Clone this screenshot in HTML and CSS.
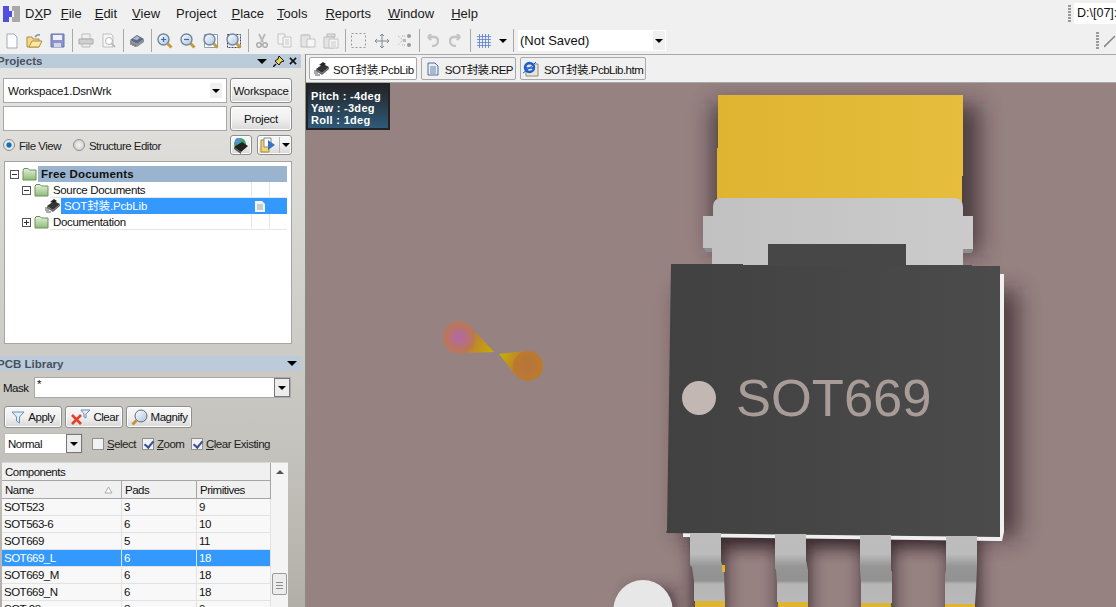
FILE: index.html
```html
<!DOCTYPE html>
<html lang="en">
<head>
<meta charset="utf-8">
<title>DXP</title>
<link rel="stylesheet" href="styles.css">
</head>
<body>
<svg class="defs" width="0" height="0" aria-hidden="true">
  <defs>
    <linearGradient id="fold" x1="0" y1="0" x2="0" y2="1"><stop offset="0" stop-color="#e4f0da"/><stop offset="1" stop-color="#8fbc78"/></linearGradient>
    <linearGradient id="glass" x1="0" y1="0" x2="1" y2="1"><stop offset="0" stop-color="#fff"/><stop offset="1" stop-color="#a9c4e4"/></linearGradient>
    <symbol id="folder" viewBox="0 0 15 14"><path d="M1 3.5 2 1.5H6L7.5 3H14V13H1Z" fill="url(#fold)" stroke="#6e8f5c"/></symbol>
    <symbol id="chip" viewBox="0 0 16 16"><path d="M2 8 9 3 15 6 8 12Z" fill="#333"/><path d="M2 8 8 12V14L2 10ZM8 12 15 6V8L8 14Z" fill="#666"/><path d="M5 4 9 1 12 3 9 5Z" fill="#222"/><path d="M0 10h3M0 12h4M1 14h5" stroke="#555"/></symbol>
    <symbol id="mag" viewBox="0 0 16 16"><circle cx="6.5" cy="6.5" r="5.5" fill="url(#glass)" stroke="#74859b" stroke-width="1.4"/><path d="M10.500 10.500 14.500 14.500" stroke="#c79a3c" stroke-width="3"/></symbol>
  </defs>
</svg>
<div class="app">
  <header class="menubar">
    <svg class="logo" width="17" height="16" viewBox="0 0 17 16"><path fill="#4f4fe0" d="M0 0H6V5H9V11H6V16H0Z"/><path fill="#a9a9a9" d="M9 0H17V16H9V11H11V5H9Z"/></svg>
    <nav class="menu">
      <span>D<u>X</u>P</span><span class="m-file"><u>F</u>ile</span><span class="m-edit"><u>E</u>dit</span><span class="m-view"><u>V</u>iew</span><span>Pro<u>j</u>ect</span><span class="m-view"><u>P</u>lace</span><span class="m-tools"><u>T</u>ools</span><span class="m-reports"><u>R</u>eports</span><span class="m-help"><u>W</u>indow</span><span class="m-help"><u>H</u>elp</span>
    </nav>
    <i class="grip grip-menu"></i>
    <div class="path">D:\[07]:</div>
  </header>

  <div class="toolbar">
    <span class="tb"><svg width="14" height="16" viewBox="0 0 14 16"><path d="M2 1H9L12 4V15H2Z" fill="#fcfdff" stroke="#a3abb6"/></svg></span>
    <span class="tb"><svg width="17" height="15" viewBox="0 0 17 15"><path d="M1 4H6L7 6H13V14H1Z" fill="#f3d98e" stroke="#b08f3c"/><path d="M3 14 6 8H16L13 14Z" fill="#fbe7a9" stroke="#b08f3c"/><path d="M9 4Q11 1 14 2" fill="none" stroke="#7f8fa6" stroke-width="1.5"/></svg></span>
    <span class="tb"><svg width="15" height="15" viewBox="0 0 15 15"><path d="M1 1H14V14H1Z" fill="#8a94d2" stroke="#6b75a8"/><path d="M3 2H12V7H3Z" fill="#eef0f8"/><path d="M4 10H11V14H4Z" fill="#d4d8e6"/></svg></span>
    <i class="sep"></i>
    <span class="tb off"><svg width="16" height="15" viewBox="0 0 16 15"><path d="M4 1H12V6H4Z" fill="#f1f1f1" stroke="#bbb"/><path d="M1 6H15V11H1Z" fill="#cfcfcf" stroke="#aaa"/><path d="M4 11H12V14H4Z" fill="#eee" stroke="#bbb"/></svg></span>
    <span class="tb off"><svg width="16" height="15" viewBox="0 0 16 15"><path d="M2 1H10L12 3V14H2Z" fill="#f6f6f6" stroke="#c0c0c0"/><circle cx="8" cy="8" r="3.500" fill="#fff" stroke="#b5b5b5"/><path d="M10.500 10.500 14 14" stroke="#bbb" stroke-width="2"/></svg></span>
    <i class="sep"></i>
    <span class="tb"><svg width="16" height="15" viewBox="0 0 16 15"><path d="M1 7 8 2 15 6 8 11Z" fill="#5d6b85"/><path d="M4 6 8 3 11 5 8 7Z" fill="#a9c0dc"/><path d="M1 7 8 11V14L1 10ZM8 11 15 6V9L8 14Z" fill="#8a8f98"/><path d="M2 10V12M4 11V13M6 12V14" stroke="#555"/></svg></span>
    <i class="sep"></i>
    <span class="tb"><svg width="16" height="16" viewBox="0 0 16 16"><use href="#mag"/><path d="M4 6.500H9M6.500 4V9" stroke="#3b6ea8" stroke-width="1.200"/></svg></span>
    <span class="tb"><svg width="16" height="16" viewBox="0 0 16 16"><use href="#mag"/><path d="M4 6.500H9" stroke="#3b6ea8" stroke-width="1.200"/></svg></span>
    <span class="tb"><svg width="16" height="16" viewBox="0 0 16 16"><path d="M1.500 1.500H14.500V14.500H1.500Z" fill="#fff" stroke="#8c9fb8"/><use href="#mag"/></svg></span>
    <span class="tb"><svg width="16" height="16" viewBox="0 0 16 16"><path d="M1.500 1.500H14.500V14.500H1.500Z" fill="#eef3f9" stroke="#445" stroke-dasharray="2 1"/><use href="#mag"/></svg></span>
    <i class="sep"></i>
    <span class="tb off"><svg width="12" height="15" viewBox="0 0 12 15"><path d="M3 1 7 9M9 1 5 9" stroke="#bbb" stroke-width="2"/><circle cx="3" cy="12" r="2.300" fill="none" stroke="#aaa" stroke-width="1.500"/><circle cx="9" cy="12" r="2.300" fill="none" stroke="#aaa" stroke-width="1.500"/></svg></span>
    <span class="tb off"><svg width="15" height="15" viewBox="0 0 15 15"><path d="M1 1H8V11H1Z" fill="#f4f4f4" stroke="#c4c4c4"/><path d="M6 4H14V14H6Z" fill="#f4f4f4" stroke="#c4c4c4"/><path d="M8 7h4M8 9h4M8 11h4" stroke="#ccc"/></svg></span>
    <span class="tb off"><svg width="16" height="15" viewBox="0 0 16 15"><path d="M1 2H10V14H1Z" fill="#e4e4e4" stroke="#bdbdbd"/><path d="M3 1H8V3H3Z" fill="#ccc"/><path d="M7 6H15V14H7Z" fill="#f6f6f6" stroke="#c4c4c4"/></svg></span>
    <span class="tb off"><svg width="16" height="16" viewBox="0 0 16 16"><path d="M4 1H12V4H4Z" fill="#ddd" stroke="#bbb"/><path d="M1 4H11V15H1Z" fill="#e4e4e4" stroke="#bdbdbd"/><path d="M6 6H15V15H6Z" fill="#f4f4f4" stroke="#c4c4c4"/><path d="M8 9h5M8 11h5M8 13h5" stroke="#ccc"/></svg></span>
    <i class="sep"></i>
    <span class="tb off"><svg width="15" height="15" viewBox="0 0 15 15"><path d="M.5.5H14.500V14.500H.5Z" fill="none" stroke="#999" stroke-dasharray="2 2"/></svg></span>
    <span class="tb"><svg width="14" height="14" viewBox="0 0 14 14"><path d="M7 0V14M0 7H14" stroke="#7d8a97"/><path d="M5 2 7 0 9 2M5 12 7 14 9 12M2 5 0 7 2 9M12 5 14 7 12 9" fill="none" stroke="#7d8a97"/></svg></span>
    <span class="tb"><svg width="15" height="14" viewBox="0 0 15 14"><path d="M1 2 6 6 1 11M5 2H9M5 11H9" fill="none" stroke="#aaa" stroke-dasharray="1 1"/><rect x="10" y="0" width="4" height="4" rx="2" fill="#999"/><rect x="10" y="9" width="4" height="4" rx="2" fill="#999"/><rect x="6" y="5" width="3" height="3" fill="#bbb"/></svg></span>
    <i class="sep"></i>
    <span class="tb off"><svg width="13" height="13" viewBox="0 0 13 13"><path d="M2 3H8Q12 3 12 7T8 12H6M2 3 5 0M2 3 5 6" fill="none" stroke="#c4c4c4" stroke-width="2.400"/></svg></span>
    <span class="tb off"><svg width="13" height="13" viewBox="0 0 13 13"><path d="M11 3H5Q1 3 1 7T5 12H7M11 3 8 0M11 3 8 6" fill="none" stroke="#c4c4c4" stroke-width="2.400"/></svg></span>
    <i class="sep"></i>
    <span class="tb"><svg width="14" height="14" viewBox="0 0 14 14"><path d="M0 2.500H14M0 5.500H14M0 8.500H14M0 11.500H14M2.500 0V14M5.500 0V14M8.500 0V14M11.500 0V14" stroke="#6f8fd6"/></svg></span>
    <span class="tb-arrow"><i class="caret"></i></span>
    <i class="sep sep-last"></i>
    <div class="combo-saved"><span>(Not Saved)</span><b class="drop"><i class="caret"></i></b></div>
    <i class="grip grip-tool"></i>
    <svg class="slash" width="12" height="14" viewBox="0 0 12 14"><path d="M0 13 11 2" stroke="#888" stroke-width="1.600"/></svg>
  </div>

  <main class="main">
    <aside class="side">
      <div class="title">
        <span class="title-text">Projects</span>
        <span class="title-tools">
          <i class="caret caret-big"></i>
          <svg class="t-pin" width="11" height="11" viewBox="0 0 11 11"><path d="M6 0 11 5 8 6 6 9 2 5 5 3Z" fill="#e6d35a" stroke="#111"/><path d="M3 8 0 11" stroke="#111" stroke-width="1.400"/></svg>
          <svg class="t-x" width="8" height="8" viewBox="0 0 9 9"><path d="M1 1 8 8M8 1 1 8" stroke="#111" stroke-width="1.800"/></svg>
        </span>
      </div>
      <div class="proj-row first">
        <div class="field"><span>Workspace1.DsnWrk</span><b class="drop"><i class="caret"></i></b></div>
        <button class="btn wide">Workspace</button>
      </div>
      <div class="proj-row">
        <div class="field"></div>
        <button class="btn wide">Project</button>
      </div>
      <div class="view-row">
        <span class="radio on"></span><span class="lbl">File View</span>
        <span class="radio second"></span><span class="lbl">Structure Editor</span>
        <button class="btn icon-a"><svg width="18" height="17" viewBox="0 0 18 17"><circle cx="8" cy="7" r="6" fill="#3aa35c"/><circle cx="6" cy="4" r="3" fill="#5a8fd6"/><path d="M2 10 10 5 16 9 9 15Z" fill="#222"/><path d="M2 10 9 15V17L2 12Z" fill="#555"/></svg></button>
        <button class="btn icon-b"><svg width="17" height="16" viewBox="0 0 17 16"><path d="M1 3H9V15H1Z" fill="#f3d27a" stroke="#a8882f"/><path d="M4 1H11V10H4Z" fill="#fff" stroke="#888"/><path d="M8 3 15 8 8 13Z" fill="#3b73c4"/></svg><em></em><i class="caret"></i></button>
      </div>
      <div class="tree">
        <div class="row l0"><i class="exp minus"></i><svg class="ic" width="15" height="14"><use href="#folder"/></svg><span class="node head">Free Documents</span></div>
        <div class="row l1"><i class="exp minus"></i><svg class="ic" width="15" height="14"><use href="#folder"/></svg><span class="node">Source Documents</span><i class="cell"></i><i class="cell"></i></div>
        <div class="row l2"><svg class="ic-chip" width="16" height="16"><use href="#chip"/></svg><span class="node sel">SOT封装.PcbLib<svg class="doc" width="10" height="11" viewBox="0 0 10 11"><path d="M0 0H7L10 3V11H0Z" fill="#f3f3f3"/><path d="M2 4H8M2 6H8M2 8H8" stroke="#9aa"/></svg></span></div>
        <div class="row l1"><i class="exp plus"></i><svg class="ic" width="15" height="14"><use href="#folder"/></svg><span class="node">Documentation</span><i class="cell"></i><i class="cell"></i></div>
      </div>
      <div class="title lib-title">
        <span class="title-text">PCB Library</span>
        <span class="title-tools"><i class="caret caret-big"></i></span>
      </div>
      <div class="mask-row">
        <span class="mask-label">Mask</span>
        <div class="mask-input"><span>*</span><b class="drop-sq"><i class="caret"></i></b></div>
      </div>
      <div class="action-row">
        <button class="btn act apply"><svg width="14" height="14" viewBox="0 0 14 14"><path d="M1 2H13L8.500 7V13L5.500 11V7Z" fill="#e3ecf7" stroke="#6e8fb2"/></svg>Apply</button>
        <button class="btn act clear"><svg width="21" height="17" viewBox="0 0 21 17"><path d="M11 1H20L16 5V9L14 8V5Z" fill="#e3ecf7" stroke="#6e8fb2"/><path d="M2 6 11 15M11 6 2 15" stroke="#e2402a" stroke-width="2.600"/></svg>Clear</button>
        <button class="btn act magnify"><svg width="17" height="17" viewBox="0 0 17 17"><circle cx="10" cy="7" r="6" fill="url(#glass)" stroke="#667"/><path d="M5.500 11.500 1.500 15.500" stroke="#c6962e" stroke-width="3"/></svg>Magnify</button>
      </div>
      <div class="option-row">
        <div class="normal"><span>Normal</span><b class="drop-sq"><i class="caret"></i></b></div>
        <label class="opt opt-select"><i class="cb"></i><span><u>S</u>elect</span></label>
        <label class="opt opt-zoom"><i class="cb on"></i><span><u>Z</u>oom</span></label>
        <label class="opt"><i class="cb on"></i><span><u>C</u>lear Existing</span></label>
      </div>
      <div class="listbox">
        <div class="list">
          <div class="cap">Components</div>
          <div class="grid-row hd"><span>Name<svg class="sort" width="9" height="8" viewBox="0 0 9 8"><path d="M4.500 1 8 7H1Z" fill="#fff" stroke="#aaa"/></svg></span><span>Pads</span><span>Primitives</span></div>
          <div class="grid-row"><span>SOT523</span><span>3</span><span>9</span></div>
          <div class="grid-row"><span>SOT563-6</span><span>6</span><span>10</span></div>
          <div class="grid-row"><span>SOT669</span><span>5</span><span>11</span></div>
          <div class="grid-row picked"><span>SOT669_L</span><span>6</span><span>18</span></div>
          <div class="grid-row"><span>SOT669_M</span><span>6</span><span>18</span></div>
          <div class="grid-row"><span>SOT669_N</span><span>6</span><span>18</span></div>
          <div class="grid-row"><span>SOT-23</span><span>3</span><span>9</span></div>
        </div>
        <div class="scroll"><i class="up"></i><b class="thumb"></b></div>
      </div>
    </aside>

    <section class="work">
      <div class="tabs">
        <span class="tab active"><svg width="16" height="16"><use href="#chip"/></svg>SOT封装.PcbLib</span>
        <span class="tab tab-rep"><svg width="12" height="14" viewBox="0 0 12 14"><path d="M1 1H8L11 4V13H1Z" fill="#e6eef8" stroke="#4f6f9a"/><path d="M3 5H9M3 7H9M3 9H9M3 11H9" stroke="#6d86a8"/></svg>SOT封装.REP</span>
        <span class="tab tab-htm"><svg width="16" height="16" viewBox="0 0 16 16"><path d="M3 3H15V15H3Z" fill="#e9e6d4" stroke="#8f8b76"/><circle cx="6.500" cy="6.500" r="4.500" fill="none" stroke="#1b5cd8" stroke-width="2.400"/><path d="M2 7H11" stroke="#1b5cd8" stroke-width="1.500"/><path d="M0 12Q6 8 13 1" fill="none" stroke="#1b5cd8"/></svg>SOT封装.PcbLib.htm</span>
      </div>
      <div class="canvas">
        <svg class="scene" width="810" height="524" viewBox="306 83 810 524">
          <defs>
            <filter id="soft" filterUnits="userSpaceOnUse" x="306" y="83" width="810" height="524"><feGaussianBlur stdDeviation="11"/></filter>
            <filter id="soft2" filterUnits="userSpaceOnUse" x="306" y="83" width="810" height="524"><feGaussianBlur stdDeviation="8"/></filter>
            <linearGradient id="yel" x1="0" x2="1" y1="0" y2="0"><stop offset="0" stop-color="#deb431"/><stop offset="1" stop-color="#e6bd3c"/></linearGradient>
            <linearGradient id="sil" x1="0" x2="1" y1="0" y2="0"><stop offset="0" stop-color="#c1c1c1"/><stop offset="1" stop-color="#cbcbcb"/></linearGradient>
            <linearGradient id="blk" x1="0" x2="1" y1="0" y2="0"><stop offset="0" stop-color="#414141"/><stop offset="1" stop-color="#4b4b4b"/></linearGradient>
            <linearGradient id="leg" x1="0" x2="0" y1="533" y2="603" gradientUnits="userSpaceOnUse"><stop offset="0" stop-color="#bdbdbd"/><stop offset=".3" stop-color="#bcbcbc"/><stop offset=".48" stop-color="#959595"/><stop offset=".68" stop-color="#929292"/><stop offset=".73" stop-color="#b6b6b6"/><stop offset="1" stop-color="#b9b9b9"/></linearGradient>
            <radialGradient id="padA" cx=".5" cy=".5" r=".55"><stop offset="0" stop-color="#b268a8"/><stop offset="1" stop-color="#bc7a48"/></radialGradient>
            <radialGradient id="padB" cx=".5" cy=".5" r=".55"><stop offset="0" stop-color="#b5743e"/><stop offset="1" stop-color="#bd7a2c"/></radialGradient>
            <linearGradient id="tipA" gradientUnits="userSpaceOnUse" x1="470" y1="340" x2="494" y2="352"><stop offset="0" stop-color="#bb7c38"/><stop offset="1" stop-color="#c8ae00"/></linearGradient>
            <linearGradient id="tipB" gradientUnits="userSpaceOnUse" x1="499" y1="354" x2="520" y2="364"><stop offset="0" stop-color="#c8b400"/><stop offset="1" stop-color="#bc7a2e"/></linearGradient>
          </defs>
          <rect x="306" y="83" width="810" height="524" fill="#978282"/>
          <g fill="#2a1c22" opacity=".68" filter="url(#soft)">
            <rect x="712" y="104" width="268" height="150"/>
            <rect x="680" y="290" width="338" height="248"/>
          </g>
          <g fill="#2a1c22" opacity=".8" filter="url(#soft2)">
            <rect x="692" y="530" width="34" height="90"/>
            <rect x="778" y="530" width="32" height="90"/>
            <rect x="862" y="532" width="32" height="90"/>
            <rect x="948" y="532" width="32" height="90"/>
            <rect x="700" y="525" width="280" height="22"/>
            <rect x="628" y="590" width="46" height="30"/>
          </g>
          <path d="M718 95H963V176H962V212H717V148H718Z" fill="url(#yel)"/>
          <path d="M704 248H712V252H706ZM963 248H973V251L971 253H963Z" fill="#8e8e8e"/>
          <path d="M703 216H713V207Q713 198 722 198H953Q963 198 963 207V216H973V249H963V266H712V248H703Z" fill="url(#sil)"/>
          <path d="M683 532H1002V540L996 541 683 537Z" fill="#efefef"/>
          <path d="M1000 274H1004V532L1002 541H996Z" fill="#f0f0f0"/>
          <path d="M671 264H743V265H972V266H1000V537L666 533 667 530Z" fill="url(#blk)"/>
          <path d="M768 244H906V266H768Z" fill="#474747"/>
          <g fill="url(#leg)">
            <path d="M690 533H721V561L724 572 725 601H694V581L692 567 690 565Z"/>
            <path d="M775 534H806V560L808 570V602H777V582L776 570 775 568Z"/>
            <path d="M860 535H891V570L892 572V603H861V582L860 570Z"/>
            <path d="M946 536H977V566L976 590 975 604H945V574L946 570Z"/>
          </g>
          <g fill="#deb431">
            <path d="M722 565H725V572H722Z"/>
            <path d="M695 601H725V607H695Z"/>
            <path d="M778 602H808V607H778Z"/>
            <path d="M861 603H891V607H861Z"/>
            <path d="M945 604H975V607H945Z"/>
          </g>
          <circle cx="643" cy="609.500" r="29.500" fill="#e7e7e7"/>
          <circle cx="699" cy="398" r="17" fill="#c2b7b3"/>
          <text class="mark" x="736" y="416">SOT669</text>
          <path d="M469 325 494 352 465 353Z" fill="url(#tipA)"/>
          <circle cx="459" cy="337.500" r="16" fill="url(#padA)"/>
          <path d="M499 354 526 351 517 377Z" fill="url(#tipB)"/>
          <circle cx="528" cy="366" r="15" fill="url(#padB)"/>
        </svg>
        <div class="hud">Pitch : -4deg<br>Yaw : -3deg<br>Roll : 1deg</div>
      </div>
    </section>
  </main>
</div>
</body>
</html>
```

FILE: styles.css
```css
* { box-sizing: border-box; }
html, body { margin: 0; padding: 0; overflow: hidden; }
body { width: 1116px; height: 607px; font-family: "Liberation Sans", "Noto Sans CJK SC", sans-serif; font-size: 12px; color: #111; background: #f0f0f0; }
.defs { display: block; height: 0; }
i, em { font-style: normal; display: block; }
.app { width: 1116px; height: 607px; display: flex; flex-direction: column; overflow: hidden; }

.menubar { height: 27px; display: flex; align-items: center; padding-left: 3px; background: #f0f0f0; }
.logo { margin-right: 5px; flex: none; }
.menu { display: flex; gap: 16px; font-size: 13px; flex: 1; color: #1a1a1a; }
.m-file { margin-left: -7px; }
.m-edit { margin-left: -3px; }
.m-view { margin-left: -1px; }
.m-tools { margin-left: -3px; }
.m-reports { margin-left: 2px; }
.m-help { margin-left: 1px; }
.grip { width: 3px; background: repeating-linear-gradient(#9a9a9a 0 2px, transparent 2px 3px); }
.grip-menu { height: 18px; margin-right: 3px; }
.path { width: 42px; height: 21px; background: #fff; font-size: 12.5px; line-height: 21px; padding-left: 3px; white-space: nowrap; }

.toolbar { height: 27px; display: flex; align-items: center; background: #f0f0f0; }
.tb { width: 23px; height: 24px; display: flex; align-items: center; justify-content: center; flex: none; }
.tb-arrow { width: 15px; display: flex; justify-content: center; flex: none; }
.sep { width: 1px; height: 23px; margin: 0 1px 0 3px; background: #a8a8a8; flex: none; }
.sep-last { margin-right: 4px; }
.caret { width: 0; height: 0; border: 4px solid transparent; border-top: 4px solid #000; border-bottom: 0; }
.caret-big { border-width: 5px 5px 0; border-top-color: #000; }
.combo-saved { width: 148px; height: 21px; background: #fff; display: flex; align-items: center; justify-content: space-between; padding: 1px; font-size: 13px; flex: none; }
.combo-saved span { padding-left: 1px; }
.drop { width: 12px; height: 19px; background: #f0f0f0; display: flex; align-items: center; justify-content: center; font-weight: 400; }
.grip-tool { height: 17px; margin-left: 430px; margin-right: 5px; flex: none; }
.slash { flex: none; }

.main { flex: 1; display: flex; min-height: 0; }
.side { width: 306px; flex: none; padding-right: 4px; font-size: 11.5px; letter-spacing: -.5px; background: linear-gradient(#e6e6e4 0, #dcdbd8 110px, #c4c2bc 400px, #b2afa8 553px); overflow: hidden; border-right: 1px solid #8d8a86; }
.title { height: 14px; background: #bccbda; display: flex; align-items: center; justify-content: space-between; font-weight: 700; font-size: 11.5px; letter-spacing: 0; color: #47525e; overflow: hidden; }
.title-text { margin-left: -3px; white-space: nowrap; }
.title-tools { display: flex; align-items: center; padding-right: 4px; }
.t-pin { margin-left: 6px; }
.t-x { margin-left: 5px; }

.proj-row { display: flex; gap: 3px; margin: 3px 0 0 3px; height: 25px; letter-spacing: -.25px; }
.proj-row.first { margin-top: 10px; }
.field { width: 224px; height: 25px; background: #fff; border: 1px solid #a9a9a9; display: flex; align-items: center; justify-content: space-between; padding: 0 4px; }
.field .drop { height: 15px; }
.btn { font: inherit; letter-spacing: inherit; color: #111; border: 1px solid #8f8f8f; border-radius: 3px; background: linear-gradient(#f8f8f8, #f0f0f0 50%, #d8d8d8); padding: 0; display: flex; align-items: center; justify-content: center; box-shadow: inset 0 0 0 1px #fff; }
.wide { width: 62px; height: 25px; }

.view-row { display: flex; align-items: center; height: 20px; margin: 4px 0 0 3px; }
.radio { width: 12px; height: 12px; border-radius: 50%; background: radial-gradient(#f4f4f4, #c6c6c6); border: 1px solid #8f8f8f; flex: none; }
.radio.on { background: radial-gradient(#1d6fa8 0 30%, #e6eef4 45%, #d6d6d6); }
.radio.second { margin-left: 12px; }
.lbl { margin-left: 4px; padding-top: 1px; color: #222; white-space: nowrap; }
.icon-a { width: 22px; height: 20px; margin-left: auto; }
.icon-b { width: 35px; height: 20px; margin: 0 9px 0 5px; gap: 2px; }
.icon-b em { width: 1px; height: 16px; background: #b8b8b8; }

.tree { width: 288px; height: 183px; margin: 6px 0 0 4px; background: #fff; border: 1px solid #a5a5a5; padding-top: 4px; line-height: 17px; letter-spacing: -.35px; }
.row { height: 16px; display: flex; align-items: center; width: 282px; }
.l0 { padding-left: 5px; }
.l1 { padding-left: 17px; }
.l2 { padding-left: 40px; }
.exp { width: 9px; height: 9px; border: 1px solid #555; background: linear-gradient(#333, #333) center / 5px 1px no-repeat; flex: none; margin-right: 3px; }
.exp.plus { background: linear-gradient(#333, #333) center / 5px 1px no-repeat, linear-gradient(#333, #333) center / 1px 5px no-repeat; }
.ic { flex: none; margin-right: 1px; }
.ic-chip { flex: none; }
.node { flex: 1; height: 16px; padding-left: 3px; white-space: nowrap; border-bottom: 1px solid #e6e6e6; }
.node.head { background: #9ab4d0; font-weight: 700; letter-spacing: .2px; border: 0; }
.node.sel { background: #3399ff; color: #fff; border: 0; display: flex; align-items: center; justify-content: space-between; padding-right: 22px; letter-spacing: -.15px; }
.doc { flex: none; }
.cell { width: 18px; height: 16px; border-left: 1px solid #e6e6e6; border-bottom: 1px solid #e6e6e6; flex: none; }

.lib-title { margin-top: 12px; height: 15px; }
.mask-row { display: flex; align-items: center; margin: 6px 0 0 3px; height: 21px; }
.mask-label { width: 31px; }
.mask-input { width: 257px; height: 21px; background: #fff; border: 1px solid #a9a9a9; display: flex; justify-content: space-between; padding-left: 2px; }
.drop-sq { width: 16px; flex: none; background: #ececec; border: 1px solid #777; display: flex; align-items: center; justify-content: center; margin-left: auto; }
.action-row { display: flex; gap: 3px; margin: 8px 0 0 4px; }
.act { height: 22px; gap: 3px; }
.apply { width: 58px; }
.clear { width: 58px; }
.magnify { width: 66px; }
.option-row { display: flex; align-items: center; margin: 5px 0 0 4px; height: 21px; }
.normal { width: 79px; height: 21px; background: #fff; border: 1px solid #bdbbb6; display: flex; padding-left: 3px; align-items: center; }
.normal .drop-sq { height: 19px; }
.opt { display: flex; align-items: center; gap: 3px; margin-left: 9px; color: #222; white-space: nowrap; }
.opt-select { width: 41px; }
.opt-zoom { width: 40px; }
.cb { width: 12px; height: 12px; border: 1px solid #8f8f8f; background: #f2f2f2; position: relative; flex: none; }
.cb.on::after { content: ""; position: absolute; left: 3px; top: 0; width: 4px; height: 7px; border: solid #3a4f9a; border-width: 0 2px 2px 0; transform: rotate(40deg); }

.listbox { display: flex; margin: 8px 0 0 2px; width: 286px; background: #f0f0f0; height: 160px; border-top: 1px solid #d8d8d8; }
.list { width: 269px; flex: none; }
.cap { height: 18px; line-height: 19px; padding-left: 3px; background: #f0f0f0; border: 1px solid #a5a5a5; border-width: 0 1px 1px 0; }
.grid-row { display: grid; grid-template-columns: 120px 75px 74px; height: 17px; line-height: 16px; background: #f8f8f8; border-bottom: 1px solid #e2e2e2; white-space: nowrap; }
.grid-row span { padding-left: 2px; border-right: 1px solid #e2e2e2; position: relative; }
.hd { height: 18px; line-height: 18px; background: #f0f0f0; border-bottom: 1px solid #a5a5a5; }
.hd span { border-right: 1px solid #a5a5a5; padding-left: 3px; }
.sort { position: absolute; right: 8px; top: 5px; }
.picked { background: #3399ff; color: #fff; }
.scroll { width: 17px; background: #f4f4f4; position: relative; }
.up { width: 0; height: 0; margin: 7px auto 0; border: 4px solid transparent; border-bottom: 4px solid #555; border-top: 0; }
.thumb { position: absolute; left: 1px; top: 110px; width: 15px; height: 22px; border: 1px solid #9a9a9a; border-radius: 2px; background: repeating-linear-gradient(#ececec 0 2px, #8c8c8c 2px 3px) center / 7px 9px no-repeat, #ececec; }

.work { flex: 1; min-width: 0; display: flex; flex-direction: column; }
.tabs { height: 29px; background: #f0f0f0; border-top: 1px solid #a8a8a8; border-bottom: 1px solid #a8a8a8; display: flex; align-items: center; gap: 4px; padding-left: 3px; }
.tab { height: 23px; display: flex; align-items: center; gap: 3px; padding: 0 2px 0 4px; border: 1px solid #a8a8a8; border-radius: 2px; font-size: 11.5px; letter-spacing: -.35px; background: #f0f0f0; white-space: nowrap; }
.tab.active { background: #fff; }
.tab-rep { gap: 6px; padding-left: 5px; letter-spacing: -.6px; }
.tab-htm { padding-left: 2px; gap: 5px; letter-spacing: -.5px; }
.canvas { flex: 1; position: relative; overflow: hidden; }
.scene { display: block; }
.mark { font-family: "Liberation Sans", sans-serif; font-size: 52.5px; fill: #a89c98; }
.hud { position: absolute; left: 0; top: 0; width: 84px; height: 47px; padding: 6px 0 0 3px; border: 2px solid #222; border-top-width: 1px; background: linear-gradient(#222225, #2f5a78); color: #fff; font-weight: 700; font-size: 11px; letter-spacing: .3px; line-height: 12px; }
```
